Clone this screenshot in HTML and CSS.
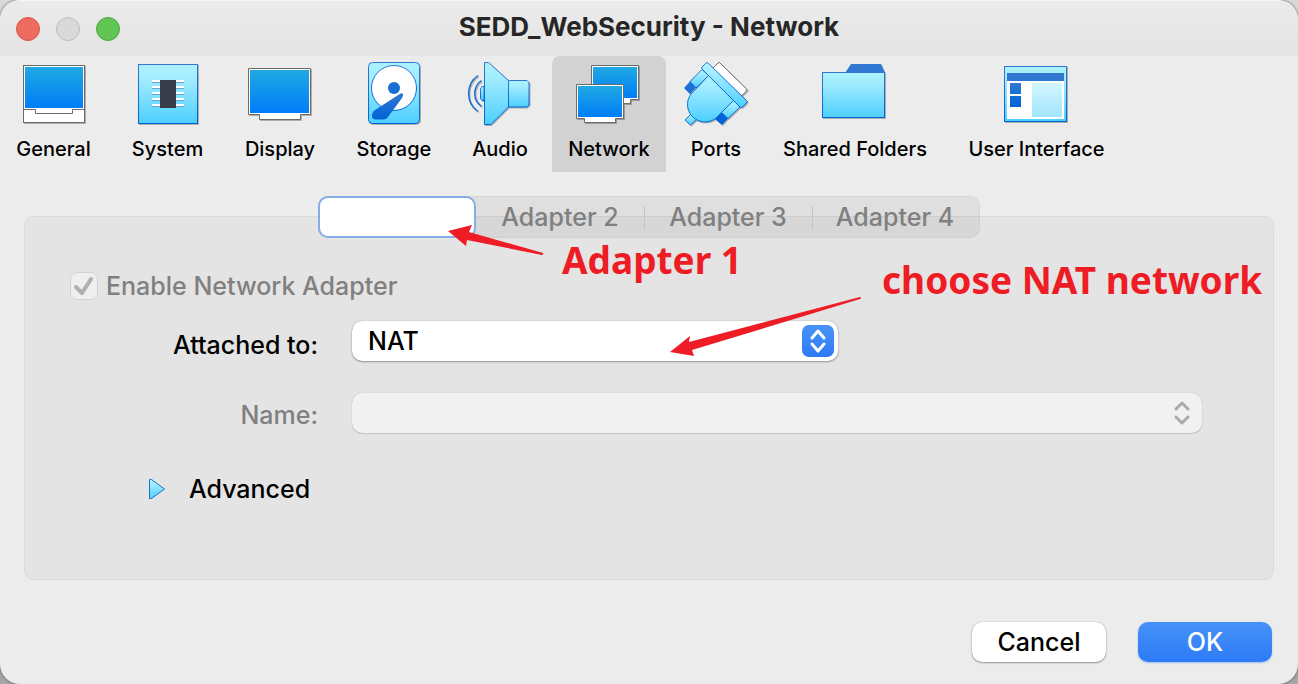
FILE: index.html
```html
<!DOCTYPE html>
<html lang="en">
<head>
<meta charset="utf-8">
<title>SEDD_WebSecurity - Network</title>
<link rel="stylesheet" href="styles.css">
</head>
<body>
<svg class="defs" aria-hidden="true">
  <defs>
    <linearGradient id="screen" x1="0" y1="0" x2="0" y2="1"><stop offset="0" stop-color="#20a9e2"/><stop offset="1" stop-color="#007df8"/></linearGradient>
    <linearGradient id="sky" x1="0" y1="0" x2="0" y2="1"><stop offset="0" stop-color="#aef2ff"/><stop offset="0.25" stop-color="#a2ecff"/><stop offset="1" stop-color="#4dcfff"/></linearGradient>
    <linearGradient id="edge" x1="0" y1="0" x2="0" y2="1"><stop offset="0" stop-color="#3078d2"/><stop offset="1" stop-color="#0064d6"/></linearGradient>
    <linearGradient id="pale" x1="0" y1="0" x2="0" y2="1"><stop offset="0" stop-color="#d4f7ff"/><stop offset="1" stop-color="#a2e4ff"/></linearGradient>
  </defs>
</svg>
<div class="window">
  <header class="titlebar">
    <div class="lights">
      <button class="light close" aria-label="Close"></button>
      <button class="light minimize" aria-label="Minimize" disabled></button>
      <button class="light zoom" aria-label="Zoom"></button>
    </div>
    <h1 class="title">SEDD_WebSecurity - Network</h1>
  </header>

  <nav class="toolbar">
    <button class="tool">
      <svg class="icon" viewBox="0 0 64 64">
        <rect x="1.500" y="3.500" width="61" height="57" fill="#fff" stroke="#6b6b6b"/>
        <rect x="3" y="5" width="58" height="41" fill="url(#screen)"/>
        <path d="M1.500 47.500H13.500V51.500H50.500V47.500H62.500" fill="none" stroke="#6b6b6b"/>
      </svg>
      General
    </button>
    <button class="tool">
      <svg class="icon" viewBox="0 0 64 64">
        <rect x="2.500" y="2.500" width="59" height="59" fill="url(#sky)" stroke="url(#edge)"/>
        <path d="M16 19H48M16 25H48M16 31H48M16 37H48M16 43H48" stroke="#fff" stroke-width="2"/>
        <path d="M16 20.500H48M16 26.500H48M16 32.500H48M16 38.500H48M16 44.500H48" stroke="#68a7ce"/>
        <rect x="24" y="18" width="16" height="28" fill="#383d49"/>
      </svg>
      System
    </button>
    <button class="tool">
      <svg class="icon" viewBox="0 0 64 64">
        <path d="M0.500 6.500H62.500V52.500H52.500V57.500H11.500V52.500H0.500Z" fill="#fff" stroke="#6b6b6b"/>
        <rect x="2" y="8" width="59" height="43" fill="url(#screen)"/>
      </svg>
      Display
    </button>
    <button class="tool">
      <svg class="icon" viewBox="0 0 64 64">
        <rect x="6.500" y="0.500" width="51" height="61" rx="4" fill="url(#sky)" stroke="url(#edge)"/>
        <circle cx="32" cy="26" r="22.500" fill="#fff" stroke="url(#edge)"/>
        <circle cx="32" cy="26" r="6" fill="#176fd4"/>
        <path d="M37 32.500Q40 30.500 41 32Q41.500 33.500 40 36L26 55Q24.500 57.500 21 57.500H13Q9.500 56.500 10 53Q10 50 13 48Z" fill="url(#edge)"/>
      </svg>
      Storage
    </button>
    <button class="tool">
      <svg class="icon" viewBox="1 0 64 64">
        <g fill="url(#sky)" stroke="url(#edge)">
          <path d="M17 24.500H15L13.500 27V36L15 38.500H17Z"/>
          <path d="M17.500 0.500H21.500L41.500 18.500V45L24 62.500H17.500Z"/>
          <path d="M41.500 18.500H60L62 20.500V43L60 45H41.500Z"/>
        </g>
        <path d="M11 13.500C-1.500 22 -1.500 41 11 49.500M14.500 18.500C5.500 25 5.500 38 14.500 44.500" fill="none" stroke="#176fd4" stroke-width="1.500"/>
      </svg>
      Audio
    </button>
    <button class="tool selected" aria-current="page">
      <svg class="icon" viewBox="0 0 64 64">
        <path d="M14.500 3.500H61.500V37.500H53.500V41.500H22.500V37.500H14.500Z" fill="#fff" stroke="#6b6b6b"/>
        <rect x="16" y="5" width="44" height="31" fill="url(#screen)"/>
        <path d="M-0.500 22.500H46.500V56.500H38.500V60.500H7.500V56.500H-0.500Z" fill="#fff" stroke="#6b6b6b"/>
        <rect x="1" y="24" width="44" height="31" fill="url(#screen)"/>
      </svg>
      Network
    </button>
    <button class="tool">
      <svg class="icon" viewBox="0 0 64 64">
        <path d="M28 7L34 1Q35 0 36 1L62.500 27Q63.500 28 62.500 29L56 35.500Z" fill="#fff" stroke="#6b6b6b"/>
        <g fill="url(#sky)" stroke="url(#edge)">
          <path d="M18 7.500L6 19.500L12 26L24.500 13.500Z"/>
          <path d="M49.500 38.500L37.500 50.500L44 56.500L56 45Z"/>
          <path d="M8.500 50.500L1 58L6.500 63L14 56Z"/>
          <path d="M24.500 13.500L49.500 38.500L35 53A17.500 17.500 0 1 1 10.500 28.500Z"/>
          <path d="M22 1Q23 0 24 1L62.500 38.500Q63.500 40 62.500 41L58.500 45Q57 46 56 45L18 7Q17 6 18 5Z"/>
        </g>
        <path d="M6 19.500L0 26L6 32L12 25.500Z" fill="#1d70d4"/>
        <path d="M37.500 50.500L44 56.500L38 63L31 57Z" fill="#0064d6"/>
      </svg>
      Ports
    </button>
    <button class="tool">
      <svg class="icon" viewBox="0 0 64 64">
        <path d="M22 11L28 2H58L62 11Z" fill="#3078d2"/>
        <rect x="-0.500" y="10.500" width="62" height="45" fill="url(#sky)" stroke="url(#edge)"/>
      </svg>
      Shared Folders
    </button>
    <button class="tool">
      <svg class="icon" viewBox="1 0 64 64">
        <rect x="0.500" y="4.500" width="62" height="55" fill="url(#sky)" stroke="url(#edge)"/>
        <rect x="3" y="11" width="57" height="46" fill="#fff"/>
        <rect x="3" y="11" width="57" height="8" fill="#3078d2"/>
        <path d="M6 21H17V32H6ZM6 34H17V45H6Z" fill="url(#edge)"/>
        <rect x="28" y="21" width="30" height="34" fill="url(#pale)"/>
      </svg>
      User Interface
    </button>
  </nav>

  <main class="content">
    <div class="tabs" role="tablist">
      <button class="tab active" role="tab" aria-selected="true" aria-label="First adapter"></button>
      <button class="tab" role="tab">Adapter 2</button>
      <button class="tab" role="tab">Adapter 3</button>
      <button class="tab" role="tab">Adapter 4</button>
    </div>
    <section class="panel">
      <label class="enable">
        <span class="check">
          <input class="box" type="checkbox" checked disabled>
          <svg class="mark" viewBox="0 0 28 28"><path d="M6 15L12 21L21 7" fill="none" stroke="#b0b0b0" stroke-width="4" stroke-linecap="round" stroke-linejoin="round"/></svg>
        </span>
        Enable Network Adapter
      </label>
      <div class="form">
        <label class="name" for="attached">Attached to:</label>
        <div class="field short">
          <select class="select" id="attached"><option>NAT</option></select>
          <svg class="stepper blue" viewBox="0 0 32 32"><path d="M10 13L16 6L22 13M10 19L16 26L22 19"/></svg>
        </div>
        <label class="name muted" for="netname">Name:</label>
        <div class="field">
          <select class="select" id="netname" disabled><option></option></select>
          <svg class="stepper" viewBox="0 0 32 32"><path d="M10 12L16 6L22 12M10 20L16 26L22 20"/></svg>
        </div>
      </div>
      <button class="advanced">
        <svg class="triangle" viewBox="0 0 16 20"><path d="M0.500 0.500H2.500L15.500 10L2.500 19.500H0.500Z" fill="url(#sky)" stroke="#176fd4"/></svg>
        Advanced
      </button>
    </section>
  </main>

  <footer class="actions">
    <button class="action">Cancel</button>
    <button class="action primary">OK</button>
  </footer>

  <svg class="arrows" viewBox="0 0 1298 684" aria-hidden="true">
    <path d="M448 231L472 225L469 232L543 253Q544 254 542 255L467 240L466 246Z"/>
    <path d="M670 352L690 336L689 342L860 297Q862 298 860 299L692 350L694 356Z"/>
  </svg>
  <p class="note note-adapter">Adapter 1</p>
  <p class="note note-nat">choose NAT network</p>
</div>
</body>
</html>
```
FILE: styles.css
```css
* {
  box-sizing: border-box;
}

body {
  margin: 0;
  background: linear-gradient(#d9d9d9, #a6a6a6);
  font-family: Inter, "Liberation Sans", sans-serif;
  font-size: 25px;
  font-weight: 500;
  color: #000;
}

button,
select {
  margin: 0;
  padding: 0;
  border: 0;
  background: none;
  font: inherit;
  color: inherit;
}

.defs {
  position: absolute;
  width: 0;
  height: 0;
}

.window {
  position: relative;
  display: flex;
  flex-direction: column;
  min-height: 100vh;
  border-radius: 20px;
  background: #ececec;
  box-shadow: 0 0 3px #555;
  overflow: hidden;
}

.titlebar {
  display: grid;
  grid-template-columns: 1fr auto 1fr;
  align-items: center;
  height: 56px;
  padding: 0 16px;
  border-top: 1px solid #f6f6f6;
  background: linear-gradient(#ebebeb, #e4e4e4);
}

.lights {
  display: flex;
  gap: 16px;
}

.light {
  width: 24px;
  height: 24px;
  border: 1px solid #bcbcbc;
  border-radius: 50%;
  background: #d9d9d9;
}

.close {
  border-color: #d9564c;
  background: #ed6b5f;
}

.zoom {
  border-color: #4ca73c;
  background: #61c554;
}

.title {
  margin: 0;
  padding-bottom: 4px;
  font-size: 26px;
  font-weight: 700;
  line-height: 32px;
  color: #262626;
}

.toolbar {
  display: grid;
  grid-template-columns: 107px 105px 104px 108px 88px 114px 84px 178px 169px;
  gap: 8px;
  height: 116px;
}

.tool {
  display: flex;
  flex-direction: column;
  align-items: center;
  gap: 11px;
  padding-top: 6px;
  border-radius: 8px 8px 0 0;
  font-size: 20px;
  line-height: 24px;
  white-space: nowrap;
}

.selected {
  background: #d2d2d2;
}

.icon {
  width: 64px;
  height: 64px;
  overflow: visible;
  filter: drop-shadow(1px 1px 0 #0004);
}

.content {
  display: flex;
  flex: 1;
  flex-direction: column;
  padding: 24px 24px 0;
}

.tabs {
  position: relative;
  display: flex;
  align-self: center;
  height: 42px;
  margin-bottom: -22px;
  padding-right: 1px;
  border: 1px solid #0000000a;
  border-radius: 10px;
  background: #0000000e;
  color: #808080;
}

.tab {
  position: relative;
  width: 168px;
  line-height: 40px;
}

.tab:last-child {
  width: 166px;
}

.tab + .tab + .tab::before {
  content: "";
  position: absolute;
  left: 0;
  top: 9px;
  width: 1px;
  height: 24px;
  background: #c4c4c4;
}

.active {
  width: 158px;
  height: 42px;
  margin: -1px 0 0 -1px;
  border: 2px solid #84aee6;
  border-radius: 10px;
  background: #fff;
}

.panel {
  flex: 1;
  padding: 53px 71px 24px 0;
  border: 1px solid #d9d9d9;
  border-radius: 10px;
  background: #e4e4e4;
}

.enable {
  display: flex;
  align-items: center;
  gap: 8px;
  margin-left: 45px;
  line-height: 32px;
  color: #808080;
}

.check {
  display: grid;
}

.box,
.mark {
  grid-area: 1 / 1;
  width: 28px;
  height: 28px;
  margin: 0;
}

.box {
  appearance: none;
  border: 1px solid #d2d2d2;
  border-radius: 7px;
  background: #efefef;
}

.form {
  display: grid;
  grid-template-columns: 293px 1fr;
  column-gap: 34px;
  row-gap: 32px;
  align-items: center;
  margin-top: 19px;
}

.name {
  padding-top: 8px;
  text-align: right;
  line-height: 32px;
}

.muted {
  padding-top: 4px;
  color: #808080;
}

.field {
  position: relative;
}

.short {
  max-width: 486px;
}

.select {
  display: block;
  appearance: none;
  width: 100%;
  height: 40px;
  padding: 0 48px 0 16px;
  border-radius: 10px;
  background: #fff;
  box-shadow: 0 0 1px #0006, 0 1px 2px #0005;
}

.select:disabled {
  background: #f1f1f1;
  opacity: 1;
  box-shadow: 0 0 1px #0004, 0 1px 1px #0002;
}

.stepper {
  position: absolute;
  right: 4px;
  top: 4px;
  width: 32px;
  height: 32px;
  border-radius: 7px;
  fill: none;
  stroke: #aaa;
  stroke-width: 3;
  stroke-linecap: round;
  stroke-linejoin: round;
  pointer-events: none;
}

.blue {
  background: linear-gradient(#4a93f8, #2c7af5);
  stroke: #fff;
}

.advanced {
  display: flex;
  align-items: center;
  gap: 24px;
  margin: 40px 0 0 124px;
  line-height: 32px;
}

.triangle {
  width: 16px;
  height: 20px;
}

.actions {
  display: flex;
  justify-content: flex-end;
  gap: 32px;
  padding: 42px 26px 22px;
}

.action {
  width: 134px;
  height: 40px;
  border-radius: 10px;
  background: #fff;
  line-height: 38px;
  box-shadow: 0 0 1px #0006, 0 1px 2px #0005;
}

.primary {
  background: linear-gradient(#4691f8, #2d7bf6);
  box-shadow: 0 1px 2px #2d7bf666;
  color: #fff;
}

.arrows {
  position: absolute;
  left: 0;
  top: 0;
  width: 1298px;
  height: 684px;
  fill: #ee1c24;
  pointer-events: none;
}

.note {
  position: absolute;
  margin: 0;
  font-family: "Noto Sans", sans-serif;
  font-size: 37px;
  font-weight: 700;
  line-height: 40px;
  white-space: nowrap;
  color: #ee1c24;
}

.note-adapter {
  left: 562px;
  top: 240px;
}

.note-nat {
  left: 882px;
  top: 260px;
}
```
